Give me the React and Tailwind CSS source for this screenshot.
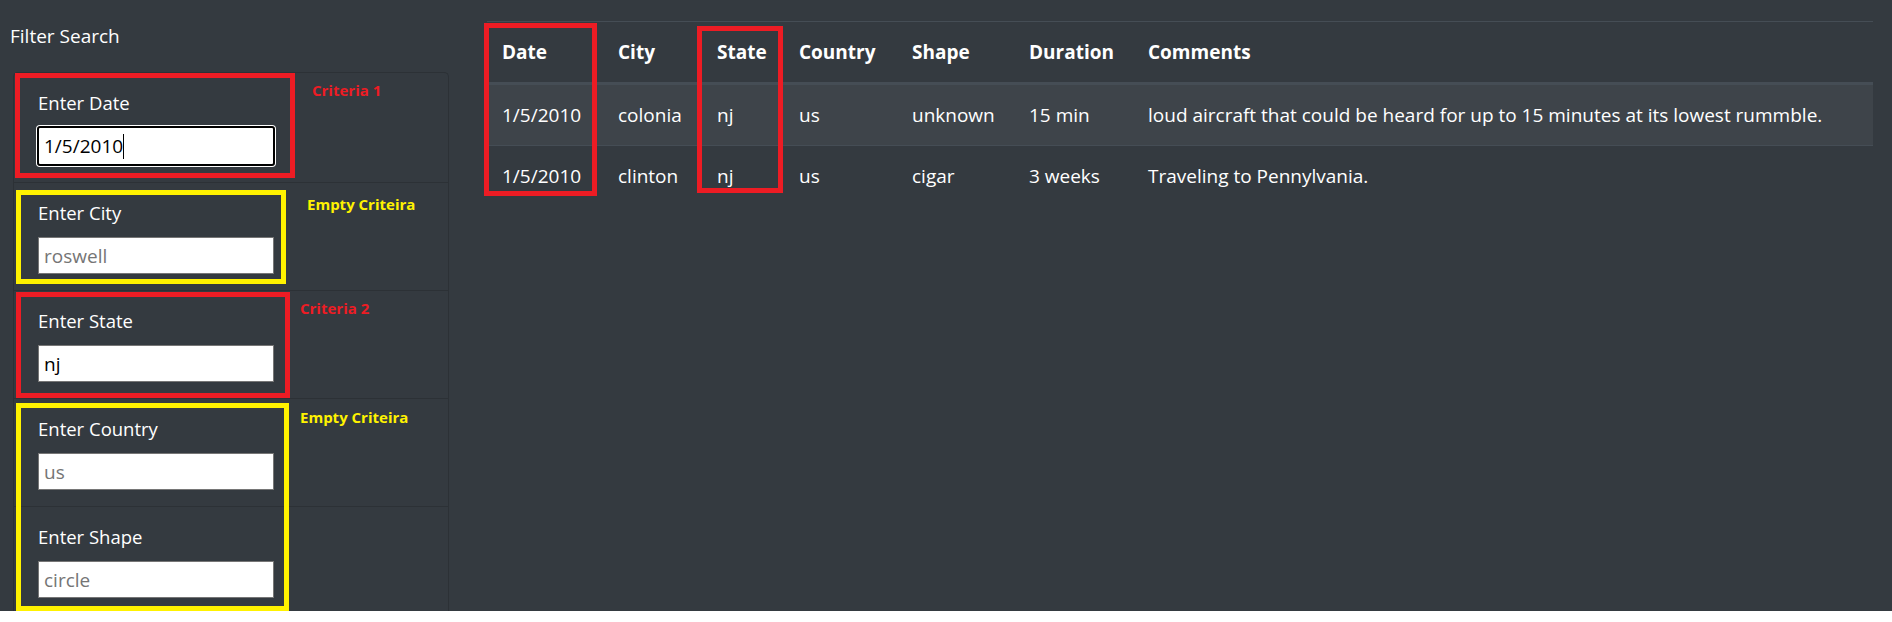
import React from "react";

const rows = [
  ["1/5/2010", "colonia", "nj", "us", "unknown", "15 min", "loud aircraft that could be heard for up to 15 minutes at its lowest rummble."],
  ["1/5/2010", "clinton", "nj", "us", "cigar", "3 weeks", "Traveling to Pennylvania."],
];

const headers = [
  ["Date", "w-[116px]"],
  ["City", "w-[99px]"],
  ["State", "w-[82px]"],
  ["Country", "w-[113px]"],
  ["Shape", "w-[117px]"],
  ["Duration", "w-[119px]"],
  ["Comments", ""],
];

function Field({ label, placeholder, value }) {
  return (
    <div className="border-b border-[#2c3136] px-[24px] pt-[15px] pb-[16px]">
      <label className="block text-[18.5px] leading-[30px] mb-[9px] text-white">{label}</label>
      <input
        readOnly
        value={value || ""}
        placeholder={placeholder}
        className="block w-[236px] h-[37px] bg-white border border-[#767676] px-[5px] text-[19px] text-black placeholder:text-[#757575] outline-none font-['Open_Sans',sans-serif]"
      />
    </div>
  );
}

export default function App() {
  return (
    <div className="relative h-[611px] w-full bg-[#343a40] text-white font-['Open_Sans',sans-serif] flex overflow-hidden">
      {/* Sidebar */}
      <aside className="w-[449px] pt-[21px] pl-[10px] shrink-0">
        <div className="text-[19px] leading-[30px] mb-[21px]">Filter Search</div>
        <div className="ml-[3px] border-t border-l border-r border-[#2c3136] rounded-t-[5px] w-[436px]">
          <div className="border-b border-[#2c3136] px-[24px] pt-[15px] pb-[16px]">
            <label className="block text-[18.5px] leading-[30px] mb-[9px]">Enter Date</label>
            <div className="w-[238px] h-[40px] -ml-[1px] -mt-[1px] bg-white border-2 border-black rounded-[3px] ring-1 ring-white flex items-center px-[5px] text-[19px] text-black">
              <span>1/5/2010</span>
              <span className="inline-block w-px h-[25px] bg-black" />
            </div>
          </div>
          <Field label="Enter City" placeholder="roswell" />
          <Field label="Enter State" value="nj" />
          <Field label="Enter Country" placeholder="us" />
          <Field label="Enter Shape" placeholder="circle" />
        </div>
      </aside>

      {/* Table */}
      <main className="pt-[21px] pl-[38px] grow">
        <table className="w-[1386px] table-fixed border-separate border-spacing-0 text-[19px] text-white">
          <thead>
            <tr>
              {headers.map(([h, w]) => (
                <th
                  key={h}
                  className={`${w} text-left font-bold px-[15px] h-[64px] leading-[30px] border-t border-b-[3px] border-[#454d55]`}
                >
                  {h}
                </th>
              ))}
            </tr>
          </thead>
          <tbody>
            {rows.map((r, i) => (
              <tr key={i} className={i === 0 ? "bg-[#3e444a]" : ""}>
                {r.map((c, j) => (
                  <td
                    key={j}
                    className={`px-[15px] leading-[30px] whitespace-nowrap ${i === 0 ? "h-[60px]" : "h-[61px] border-t border-[#454d55]"}`}
                  >
                    {c}
                  </td>
                ))}
              </tr>
            ))}
          </tbody>
        </table>
      </main>

      {/* Annotation overlays drawn on top of the screenshot */}
      <div className="absolute left-[15px] top-[73px] w-[280px] h-[105px] border-[5px] border-[#ed1c24]" />
      <div className="absolute left-[16px] top-[190px] w-[270px] h-[94px] border-[5px] border-[#fff200]" />
      <div className="absolute left-[16px] top-[292px] w-[274px] h-[106px] border-[5px] border-[#ed1c24]" />
      <div className="absolute left-[16px] top-[403px] w-[273px] h-[208px] border-[5px] border-[#fff200]" />
      <div className="absolute left-[484px] top-[23px] w-[113px] h-[173px] border-[5px] border-[#ed1c24]" />
      <div className="absolute left-[697px] top-[26px] w-[86px] h-[167px] border-[5px] border-[#ed1c24]" />

      <div className="absolute left-[312px] top-[83px] text-[15px] leading-none font-bold text-[#ed1c24]">Criteria 1</div>
      <div className="absolute left-[307px] top-[197px] text-[15px] leading-none font-bold text-[#fff200]">Empty Criteira</div>
      <div className="absolute left-[300px] top-[301px] text-[15px] leading-none font-bold text-[#ed1c24]">Criteria 2</div>
      <div className="absolute left-[300px] top-[410px] text-[15px] leading-none font-bold text-[#fff200]">Empty Criteira</div>
    </div>
  );
}
